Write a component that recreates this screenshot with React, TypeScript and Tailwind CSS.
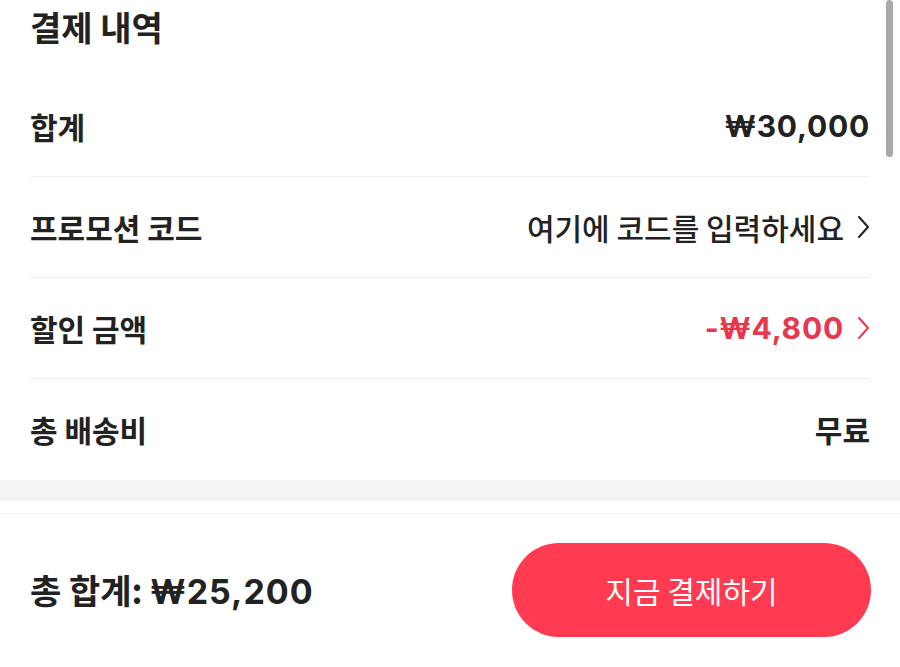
import React from "react";

const NUM = { fontFamily: 'Inter, "Noto Sans CJK KR", sans-serif' };

const Chevron = ({ color }: { color: string }) => (
  <svg width="14" height="26" viewBox="0 0 14 26" fill="none" className="ml-[12px]">
    <polyline points="3,3 12,13 3,23" stroke={color} strokeWidth="2" strokeLinecap="round" strokeLinejoin="round" />
  </svg>
);

const Row = ({ label, children, border = true }: { label: string; children: React.ReactNode; border?: boolean }) => (
  <div className={`flex h-[101px] items-center justify-between ${border ? "border-b border-[#efefef]" : ""}`}>
    <span className="text-[30px] font-semibold text-[#222]">{label}</span>
    <div className="flex items-center">{children}</div>
  </div>
);

export default function App() {
  return (
    <div
      className="relative h-[667px] w-[900px] overflow-hidden bg-white"
      style={{ fontFamily: '"Noto Sans CJK KR", "Noto Sans", sans-serif' }}
    >
      <div className="px-[30px]">
        <div className="flex h-[52px] items-center">
          <h1 className="text-[34px] font-bold text-[#222]">결제 내역</h1>
        </div>
        <div className="mt-[24px]">
          <Row label="합계">
            <span className="text-[30px] font-bold tracking-[0.8px] text-[#222]" style={NUM}>₩30,000</span>
          </Row>
          <Row label="프로모션 코드">
            <span className="text-[30px] font-medium text-[#222]">여기에 코드를 입력하세요</span>
            <Chevron color="#222" />
          </Row>
          <Row label="할인 금액">
            <span className="text-[30px] font-bold tracking-[0.8px] text-[#e6394f]" style={NUM}>-₩4,800</span>
            <Chevron color="#e6394f" />
          </Row>
          <Row label="총 배송비" border={false}>
            <span className="text-[30px] font-semibold text-[#222]">무료</span>
          </Row>
        </div>
      </div>
      <div className="h-[21px] bg-[#f4f4f4]" />
      <div className="h-[12px]" />
      <div className="flex h-[153px] items-center justify-between border-t border-[#f0f0f0] pl-[30px] pr-[29px]">
        <span className="text-[34px] font-bold text-[#222]">
          총 합계: <span className="tracking-[1px]" style={NUM}>₩25,200</span>
        </span>
        <button className="flex h-[94px] w-[359px] items-center justify-center rounded-full bg-[#ff3a51] text-[30px] font-normal text-white">
          지금 결제하기
        </button>
      </div>
      <div className="absolute right-[7px] top-0 h-[157px] w-[7px] rounded-full bg-[#a9a9a9]" />
    </div>
  );
}
